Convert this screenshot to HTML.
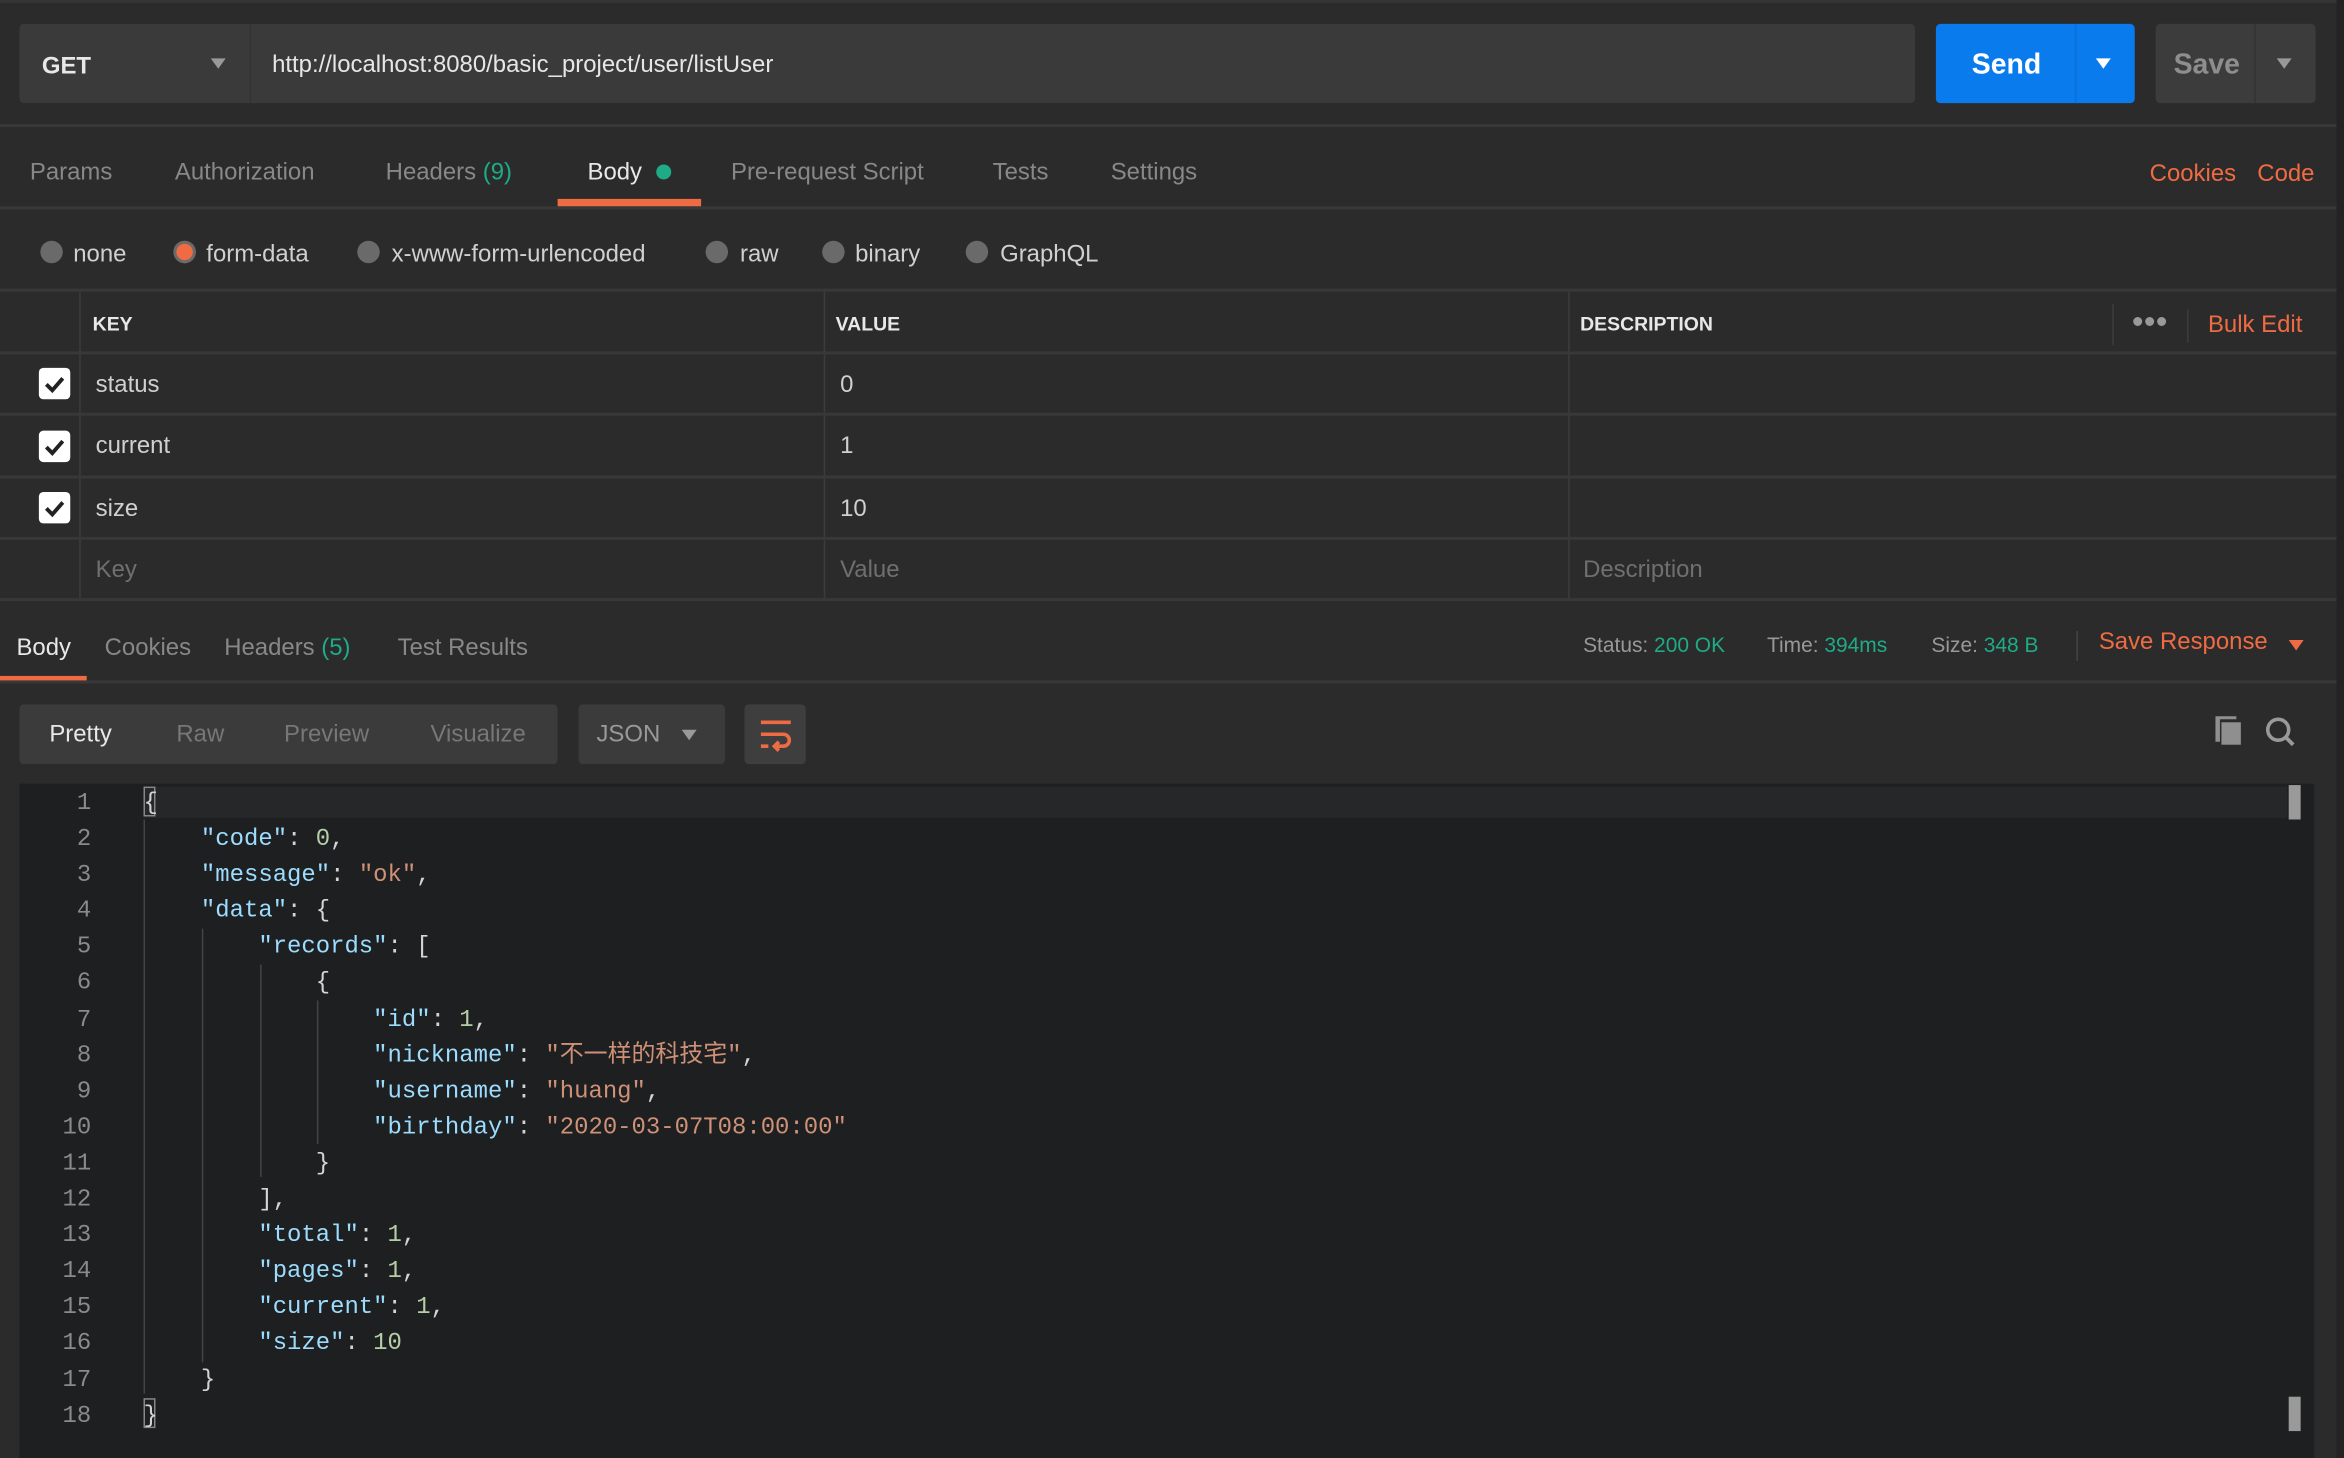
<!DOCTYPE html>
<html><head><meta charset="utf-8"><style>
html,body{margin:0;padding:0;background:#2b2b2b;overflow:hidden;width:2344px;height:1458px}
#r{position:absolute;left:0;top:0;width:1568px;height:975px;transform:scale(1.4949,1.4954);transform-origin:0 0;background:#2b2b2b;font-family:"Liberation Sans","Noto Sans CJK SC",sans-serif;font-size:16px;color:#d0d0d0}
.a{position:absolute;white-space:nowrap}
.hl{position:absolute;height:2px;background:#383838;left:0;width:1563px}
.vl{position:absolute;width:1px;background:#3c3c3c}
.g{color:#888}.o{color:#ef6b43}.t{color:#1fab86}
.rad{position:absolute;width:15px;height:15px;border-radius:50%;background:#6a6a6a;top:161px}
.cb{position:absolute;left:26px;width:21px;height:21px;background:#fff;border-radius:3px}
.cb svg{position:absolute;left:3px;top:3px}
.code{font-family:"Liberation Mono","Noto Sans CJK SC",monospace;font-size:16px}
.ln{position:absolute;right:1507px;color:#8a8a8a;font-family:"Liberation Mono",monospace;font-size:16px;text-align:right}
.k{color:#9cdcfe}.s{color:#ce9178}.n{color:#b5cea8}
.guide{position:absolute;width:1px;background:#444}
</style></head><body><div id="r">
<div class="a" style="left:0;top:0;width:1563px;height:2px;background:#353535"></div>
<div class="a" style="left:1563px;top:0;width:5px;height:975px;background:#232323"></div>
<!-- url bar -->
<div class="a" style="left:13px;top:16px;width:1268px;height:53px;background:#3a3a3a;border-radius:3px"></div>
<div class="a" style="left:167px;top:16px;width:1px;height:53px;background:#333"></div>
<div class="a" style="left:28px;top:36px;font-weight:bold;color:#e8e8e8">GET</div>
<div class="a" style="left:141px;top:39px;width:0;height:0;border-left:5px solid transparent;border-right:5px solid transparent;border-top:7px solid #999"></div>
<div class="a" style="left:182px;top:35px;color:#e6e6e6">http://localhost:8080/basic_project/user/listUser</div>
<div class="a" style="left:1295px;top:16px;width:133px;height:53px;background:#097bed;border-radius:3px"></div>
<div class="a" style="left:1388px;top:16px;width:1px;height:53px;background:#0a6fd4"></div>
<div class="a" style="left:1319px;top:33px;font-size:19px;font-weight:800;color:#fff">Send</div>
<div class="a" style="left:1402px;top:39px;border-left:5px solid transparent;border-right:5px solid transparent;border-top:7px solid #fff"></div>
<div class="a" style="left:1442px;top:16px;width:107px;height:53px;background:#3c3c3c;border-radius:3px"></div>
<div class="a" style="left:1508px;top:16px;width:1px;height:53px;background:#333"></div>
<div class="a" style="left:1454px;top:33px;font-size:19px;font-weight:800;color:#8e8e8e">Save</div>
<div class="a" style="left:1523px;top:39px;border-left:5px solid transparent;border-right:5px solid transparent;border-top:7px solid #999"></div>
<div class="hl" style="top:83px"></div>
<!-- tabs -->
<div class="a g" style="left:20px;top:107px">Params</div>
<div class="a g" style="left:117px;top:107px">Authorization</div>
<div class="a g" style="left:258px;top:107px">Headers <span class="t">(9)</span></div>
<div class="a" style="left:393px;top:107px;color:#e8e8e8">Body</div>
<div class="a" style="left:439px;top:110px;width:10px;height:10px;border-radius:50%;background:#1fab86"></div>
<div class="a" style="left:373px;top:133px;width:96px;height:5px;background:#ef6b43"></div>
<div class="a g" style="left:489px;top:107px">Pre-request Script</div>
<div class="a g" style="left:664px;top:107px">Tests</div>
<div class="a g" style="left:743px;top:107px">Settings</div>
<div class="a o" style="left:1438px;top:108px">Cookies</div>
<div class="a o" style="left:1510px;top:108px">Code</div>
<div class="hl" style="top:138px"></div>
<!-- radios -->
<div class="rad" style="left:27px"></div><div class="a" style="left:49px;top:162px">none</div>
<div class="rad" style="left:116px;background:#ef6b43;box-shadow:0 0 0 2px #6a6a6a inset;border:0"></div><div class="a" style="left:138px;top:162px">form-data</div>
<div class="rad" style="left:239px"></div><div class="a" style="left:262px;top:162px">x-www-form-urlencoded</div>
<div class="rad" style="left:472px"></div><div class="a" style="left:495px;top:162px">raw</div>
<div class="rad" style="left:550px"></div><div class="a" style="left:572px;top:162px">binary</div>
<div class="rad" style="left:646px"></div><div class="a" style="left:669px;top:162px">GraphQL</div>
<div class="hl" style="top:193px"></div>
<!-- table -->
<div class="vl" style="left:53px;top:195px;height:206px"></div>
<div class="vl" style="left:551px;top:195px;height:206px"></div>
<div class="vl" style="left:1049px;top:195px;height:206px"></div>
<div class="vl" style="left:1413px;top:203px;height:28px"></div>
<div class="vl" style="left:1463px;top:207px;height:22px"></div>
<div class="a" style="left:62px;top:209px;font-size:13px;font-weight:bold;color:#e8e8e8">KEY</div>
<div class="a" style="left:559px;top:209px;font-size:13px;font-weight:bold;color:#e8e8e8">VALUE</div>
<div class="a" style="left:1057px;top:209px;font-size:13px;font-weight:bold;color:#e8e8e8">DESCRIPTION</div>
<div class="a" style="left:1427px;top:212px;width:6px;height:6px;border-radius:50%;background:#999;box-shadow:8px 0 #999,16px 0 #999"></div>
<div class="a o" style="left:1477px;top:209px">Bulk Edit</div>
<div class="hl" style="top:235px"></div>
<div class="hl" style="top:276px"></div>
<div class="hl" style="top:318px"></div>
<div class="hl" style="top:359px"></div>
<div class="hl" style="top:400px;height:2px"></div>
<div class="cb" style="top:246px"><svg width="15" height="15"><path d="M2 8l4 4 7-8" stroke="#222" stroke-width="2.6" fill="none"/></svg></div>
<div class="cb" style="top:288px"><svg width="15" height="15"><path d="M2 8l4 4 7-8" stroke="#222" stroke-width="2.6" fill="none"/></svg></div>
<div class="cb" style="top:329px"><svg width="15" height="15"><path d="M2 8l4 4 7-8" stroke="#222" stroke-width="2.6" fill="none"/></svg></div>
<div class="a" style="left:64px;top:249px">status</div><div class="a" style="left:562px;top:249px">0</div>
<div class="a" style="left:64px;top:290px">current</div><div class="a" style="left:562px;top:290px">1</div>
<div class="a" style="left:64px;top:332px">size</div><div class="a" style="left:562px;top:332px">10</div>
<div class="a" style="left:64px;top:373px;color:#6f6f6f">Key</div>
<div class="a" style="left:562px;top:373px;color:#6f6f6f">Value</div>
<div class="a" style="left:1059px;top:373px;color:#6f6f6f">Description</div>
<!-- response tabs -->
<div class="a" style="left:11px;top:425px;color:#e8e8e8">Body</div>
<div class="a" style="left:0;top:452px;width:58px;height:4px;background:#ef6b43"></div>
<div class="a g" style="left:70px;top:425px">Cookies</div>
<div class="a g" style="left:150px;top:425px">Headers <span class="t">(5)</span></div>
<div class="a g" style="left:266px;top:425px">Test Results</div>
<div class="a" style="left:1059px;top:423px;font-size:14px;color:#999">Status: <span class="t">200 OK</span></div>
<div class="a" style="left:1182px;top:423px;font-size:14px;color:#999">Time: <span class="t">394ms</span></div>
<div class="a" style="left:1292px;top:423px;font-size:14px;color:#999">Size: <span class="t">348 B</span></div>
<div class="vl" style="left:1389px;top:422px;height:20px;background:#444"></div>
<div class="a o" style="left:1404px;top:421px">Save Response</div>
<div class="a" style="left:1531px;top:428px;border-left:5px solid transparent;border-right:5px solid transparent;border-top:7px solid #ef6b43"></div>
<div class="hl" style="top:455px"></div>
<!-- toolbar -->
<div class="a" style="left:13px;top:471px;width:360px;height:40px;background:#3b3b3b;border-radius:3px"></div>
<div class="a" style="left:33px;top:483px;color:#e8e8e8">Pretty</div>
<div class="a" style="left:118px;top:483px;color:#777">Raw</div>
<div class="a" style="left:190px;top:483px;color:#777">Preview</div>
<div class="a" style="left:288px;top:483px;color:#777">Visualize</div>
<div class="a" style="left:387px;top:471px;width:98px;height:40px;background:#3b3b3b;border-radius:3px"></div>
<div class="a" style="left:399px;top:483px;color:#999">JSON</div>
<div class="a" style="left:456px;top:488px;border-left:5px solid transparent;border-right:5px solid transparent;border-top:7px solid #999"></div>
<div class="a" style="left:498px;top:471px;width:41px;height:40px;background:#3e3e3e;border-radius:3px"></div>
<svg class="a" style="left:506px;top:478px" width="26" height="26"><path d="M3 5h20M3 13h15a4 4 0 0 1 0 8h-6M15 18l-3 3 3 3M3 21h5" stroke="#ef6b43" stroke-width="2.4" fill="none"/></svg>
<svg class="a" style="left:1480px;top:478px" width="22" height="22"><rect x="6" y="5" width="13" height="15" fill="#8f8f8f"/><path d="M2 3v15h3V3h11V1H2z" fill="#8f8f8f"/></svg>
<svg class="a" style="left:1514px;top:478px" width="24" height="24"><circle cx="10" cy="10" r="7" stroke="#999" stroke-width="2.4" fill="none"/><path d="M15 15l5 5" stroke="#999" stroke-width="2.6"/></svg>
<!-- editor -->
<div class="a" style="left:13px;top:524px;width:1535px;height:451px;background:#1e1f20"></div>
<div class="a" style="left:96px;top:526px;width:1434px;height:21px;background:#262728"></div>
<div class="a" style="left:1531px;top:525px;width:8px;height:23px;background:#9a9a9a"></div>
<div class="a" style="left:1531px;top:934px;width:8px;height:23px;background:#9a9a9a"></div>
<div class="guide" style="left:96px;top:548px;height:384px"></div>
<div class="guide" style="left:135px;top:621px;height:290px"></div>
<div class="guide" style="left:174px;top:645px;height:142px"></div>
<div class="guide" style="left:212px;top:669px;height:96px"></div>
<div class="a" style="left:96px;top:526px;width:8px;height:20px;border:1px solid #888;box-sizing:border-box"></div>
<div class="a" style="left:96px;top:935px;width:8px;height:20px;border:1px solid #888;box-sizing:border-box"></div>
<div class="ln" style="top:525px;line-height:24.1px">1<br>2<br>3<br>4<br>5<br>6<br>7<br>8<br>9<br>10<br>11<br>12<br>13<br>14<br>15<br>16<br>17<br>18</div>
<div class="a code" style="left:96px;top:525px;line-height:24.1px;color:#d4d4d4;white-space:pre">{
    <span class="k">"code"</span>: <span class="n">0</span>,
    <span class="k">"message"</span>: <span class="s">"ok"</span>,
    <span class="k">"data"</span>: {
        <span class="k">"records"</span>: [
            {
                <span class="k">"id"</span>: <span class="n">1</span>,
                <span class="k">"nickname"</span>: <span class="s">"不一样的科技宅"</span>,
                <span class="k">"username"</span>: <span class="s">"huang"</span>,
                <span class="k">"birthday"</span>: <span class="s">"2020-03-07T08:00:00"</span>
            }
        ],
        <span class="k">"total"</span>: <span class="n">1</span>,
        <span class="k">"pages"</span>: <span class="n">1</span>,
        <span class="k">"current"</span>: <span class="n">1</span>,
        <span class="k">"size"</span>: <span class="n">10</span>
    }
}</div>
</div></body></html>
